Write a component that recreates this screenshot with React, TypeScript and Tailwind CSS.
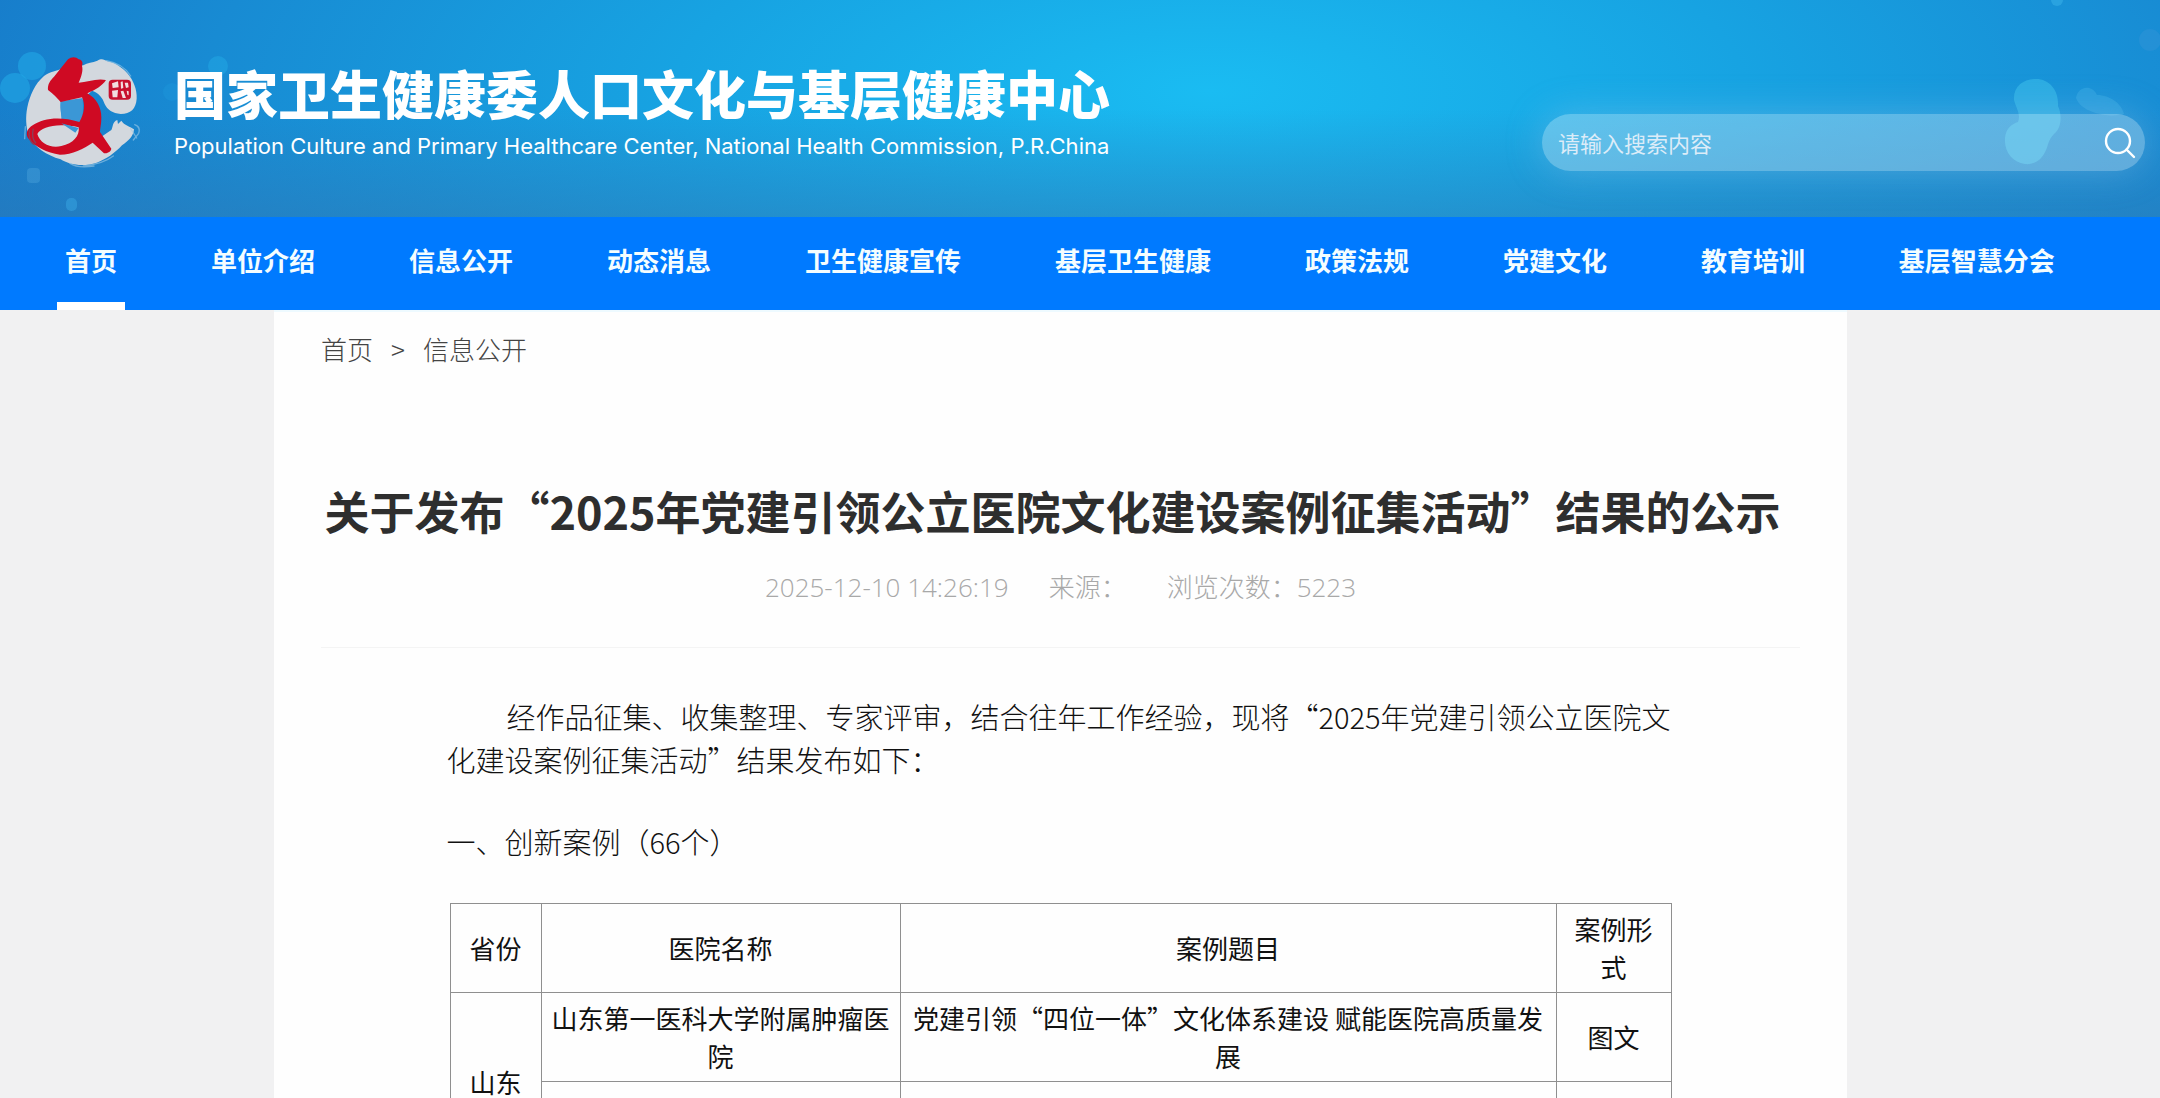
import React from "react";

const navItems = [
  "首页",
  "单位介绍",
  "信息公开",
  "动态消息",
  "卫生健康宣传",
  "基层卫生健康",
  "政策法规",
  "党建文化",
  "教育培训",
  "基层智慧分会",
];

function Logo() {
  return (
    <svg viewBox="72 72 348 348" className="h-[116px] w-[116px] shrink-0" aria-hidden="true">
      <path
        d="M250 106C262 98 278 98 292 92C305 84 312 88 322 94C345 98 366 112 382 130C400 150 412 180 410 206C408 236 392 252 362 252C338 250 322 240 314 222C308 204 298 190 276 182L246 210L182 214C180 238 182 262 196 280L236 300L290 330L334 300C340 290 336 276 352 270L354 282L364 272C372 286 392 290 402 298C400 320 384 334 366 346C344 370 318 388 290 398C250 412 206 404 182 388C140 376 104 352 86 318C78 290 76 262 82 232C90 196 104 162 132 138C150 124 170 124 190 114Z"
        fill="#d3d8de"
      />
      <path d="M320 92C352 98 376 112 392 138M404 284C416 288 420 298 416 310L400 330M340 378C322 392 290 404 250 408M210 400C228 412 256 412 282 408M392 296L410 324M76 290L74 326" fill="none" stroke="#9fcbe8" strokeWidth="4" strokeLinecap="round" opacity="0.6" />
      <path d="M182 214L248 204C250 240 250 275 236 302C218 296 192 284 184 266Z" fill="#3b97d6" />
      <path
        d="M204 88C214 80 228 80 236 88C246 90 250 98 246 108C250 122 244 140 236 158C262 156 290 144 318 150C306 168 288 178 262 190C290 206 304 232 304 262C304 284 300 296 300 306L334 356C332 366 322 370 312 370L278 338C250 356 218 374 180 374C140 368 106 352 84 324C76 310 82 296 98 286C130 264 180 258 238 276C254 250 256 222 246 202L182 216C172 204 158 190 144 180C142 162 152 150 162 140C176 122 190 106 204 88Z"
        fill="#cf0a23"
      />
      <path d="M112 312C124 290 172 278 236 292C240 316 220 342 184 348C152 356 120 340 112 312Z" fill="#d3d8de" />
      <path d="M88 300C84 322 92 340 104 344M100 296C96 312 98 330 108 340" fill="none" stroke="#8a3f58" strokeWidth="4" />
      <path d="M184 280L236 294L226 308Z" fill="#3b97d6" />
      <rect x="326" y="149" width="67" height="60" rx="12" fill="#c8102e" />
      <path d="M336 160L354 154L356 172L338 174ZM336 182L354 180L352 202L338 202ZM362 156L368 154L370 174L363 176ZM374 158L384 158L386 172L378 174ZM362 184L370 182L378 204L368 204ZM380 182L386 184L386 196L382 194Z" fill="#f1dde0" />
    </svg>
  );
}

function Bubbles() {
  return (
    <>
      <svg viewBox="0 0 240 217" className="absolute left-0 top-0 h-[217px] w-[240px]" aria-hidden="true">
        <g fill="#22a9e6">
          <circle cx="32" cy="66" r="14" opacity="0.6" />
          <circle cx="15" cy="88" r="15" opacity="0.6" />
          <circle cx="218" cy="66" r="10" opacity="0.5" />
          <circle cx="172" cy="92" r="9" opacity="0.2" />
          <rect x="27" y="168" width="13" height="15" rx="4" fill="#5fb2e4" opacity="0.3" />
          <rect x="66" y="198" width="11" height="13" rx="5" fill="#3fb2ea" opacity="0.4" />
        </g>
      </svg>
      <svg viewBox="0 0 200 217" className="absolute right-0 top-0 h-[217px] w-[200px]" aria-hidden="true">
        <path
          d="M54 100C53 86 64 79 76 79C90 79 99 91 98 106C102 114 102 128 94 134C88 140 88 146 86 150C82 160 74 165 65 164C52 162 44 152 45 138C46 128 52 124 58 122C61 114 56 108 54 100Z"
          fill="#33b4e6"
          opacity="0.75"
        />
        <path d="M116 98C118 86 132 84 137 95C150 95 162 104 164 114C152 118 122 114 116 98Z" fill="#36a8e2" opacity="0.55" />
        <circle cx="190" cy="40" r="11" fill="#2f93d8" opacity="0.5" />
        <circle cx="97" cy="0" r="6" fill="#35aee6" opacity="0.6" />
      </svg>
    </>
  );
}

function Header() {
  return (
    <header className="relative flex h-[217px] items-start justify-between bg-[linear-gradient(to_bottom,transparent_50%,rgba(48,120,180,0.45)_100%),radial-gradient(ellipse_62%_220%_at_56%_42%,#1abcf2_0%,#17a3e2_40%,#188bd3_75%,#1778c8_100%)] pl-6 pr-[15px]">
      <Bubbles />
      <div className="relative flex gap-[34px] pt-[54px]">
        <Logo />
        <div className="whitespace-nowrap text-white">
          <h1 className="text-[52px] font-black leading-[78px]">国家卫生健康委人口文化与基层健康中心</h1>
          <p className="font-['Inter','Noto_Sans_CJK_SC',sans-serif] text-[22px] leading-7">
            Population Culture and Primary Healthcare Center, National Health Commission, P.R.China
          </p>
        </div>
      </div>
      <form
        className="relative mt-[114px] flex h-[57px] w-[603px] items-center rounded-full bg-white/30 pl-4 pr-2 shadow-[0_0_36px_rgba(160,200,235,0.35)]"
        onSubmit={(e) => e.preventDefault()}
      >
        <input
          type="text"
          aria-label="搜索"
          placeholder="请输入搜索内容"
          className="min-w-0 flex-1 bg-transparent text-[22px] text-white outline-none placeholder:text-[#dcecf8]"
        />
        <button type="submit" aria-label="搜索" className="text-white">
          <svg viewBox="0 0 34 34" className="h-[34px] w-[34px]" fill="none" stroke="currentColor" strokeWidth="2.4" strokeLinecap="round">
            <circle cx="15" cy="15" r="12" />
            <path d="M23.5 23.5L31 31" />
          </svg>
        </button>
      </form>
    </header>
  );
}

function Nav() {
  return (
    <nav className="flex h-[93px] justify-between bg-[#007aff] pl-[65px] pr-[105px] text-[26px] font-bold text-[#f4fdff]">
      {navItems.map((item, i) => (
        <a
          key={item}
          href="#"
          className={
            i === 0
              ? "-mx-2 flex items-center whitespace-nowrap border-b-8 border-white px-2"
              : "flex items-center whitespace-nowrap border-b-8 border-transparent"
          }
        >
          {item}
        </a>
      ))}
    </nav>
  );
}

const cell = "border border-[#8f8f8f] px-2 py-[6px]";

export default function App() {
  return (
    <div className="h-screen overflow-hidden bg-[#f1f1f2] font-['Noto_Sans_CJK_SC','Noto_Sans',sans-serif]">
      <Header />
      <Nav />
      <main className="ml-[274px] mr-[313px] h-full border-t-2 border-[#eefaff] bg-[#fefefe] px-[47px]">
        <div className="flex gap-[18px] pt-[18px] text-[26px] font-light leading-[38px] text-[#444]">
          <a href="#">首页</a>
          <span>&gt;</span>
          <a href="#">信息公开</a>
        </div>

        <article>
          <header className="border-b border-[#f4f4f4] pb-[40px] pt-[109px] text-center">
            <h2 className="whitespace-nowrap pr-4 text-[45px] font-bold leading-[68px] text-[#2e2e2e]">
              关于发布“2025年党建引领公立医院文化建设案例征集活动”结果的公示
            </h2>
            <div className="mt-[22px] flex justify-center gap-10 font-['Open_Sans','Noto_Sans_CJK_SC',sans-serif] text-[26px] font-light leading-[40px] text-[#a8a8a8]">
              <span>2025-12-10 14:26:19</span>
              <span>来源：</span>
              <span>浏览次数：5223</span>
            </div>
          </header>

          <div className="mx-auto mt-[47px] w-[1228px] text-[29px] font-light leading-[43px] text-[#111]">
            <p className="indent-[60px]">
              经作品征集、收集整理、专家评审，结合往年工作经验，现将“2025年党建引领公立医院文化建设案例征集活动”结果发布如下：
            </p>
            <h3 className="mt-[39px]">一、创新案例（66个）</h3>
            <table className="mx-auto mt-[40px] w-[1222px] table-fixed border-collapse text-center text-[26px] font-normal leading-[38px] text-[#111]">
              <colgroup>
                <col className="w-[91px]" />
                <col className="w-[359px]" />
                <col />
                <col className="w-[115px]" />
              </colgroup>
              <thead>
                <tr className="h-[89px]">
                  <th scope="col" className={cell + " font-normal"}>省份</th>
                  <th scope="col" className={cell + " font-normal"}>医院名称</th>
                  <th scope="col" className={cell + " font-normal"}>案例题目</th>
                  <th scope="col" className={cell + " font-normal"}>案例形式</th>
                </tr>
              </thead>
              <tbody>
                <tr className="h-[89px]">
                  <td rowSpan={2} className={cell}>山东</td>
                  <td className={cell}>山东第一医科大学附属肿瘤医院</td>
                  <td className={cell}>党建引领“四位一体”文化体系建设 赋能医院高质量发展</td>
                  <td className={cell}>图文</td>
                </tr>
                <tr className="h-[89px]">
                  <td className={cell}></td>
                  <td className={cell}></td>
                  <td className={cell}></td>
                </tr>
              </tbody>
            </table>
          </div>
        </article>
      </main>
    </div>
  );
}
